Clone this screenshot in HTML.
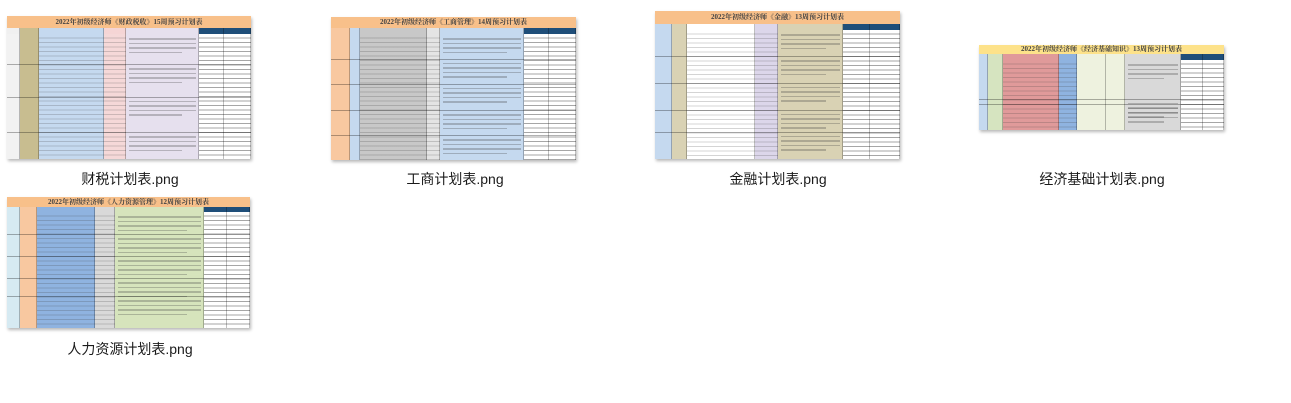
<!DOCTYPE html>
<html><head><meta charset="utf-8">
<style>
html,body{margin:0;padding:0;background:#fff;width:1291px;height:403px;overflow:hidden;position:relative;font-family:"Liberation Sans","Noto Sans CJK SC",sans-serif;}
.th{position:absolute;background:#fff;box-shadow:1px 2px 3px rgba(0,0,0,.28);overflow:hidden;}
.tt{position:absolute;left:0;right:0;top:0;font-family:"Liberation Serif","Noto Serif CJK SC",serif;font-size:7px;font-weight:bold;color:#444;text-align:center;white-space:nowrap;}
.col{position:absolute;border-right:1px solid rgba(0,0,0,.25);box-sizing:border-box;}
.hd{position:absolute;border-right:1px solid rgba(0,0,0,.25);box-sizing:border-box;}
.lb{position:absolute;font-size:14px;color:#1a1a1a;white-space:nowrap;transform:translateX(-50%);}
</style></head><body>
<div id="root"></div>
<div class="lb" style="left:130px;top:169px">财税计划表.png</div>
<div class="lb" style="left:455px;top:169px">工商计划表.png</div>
<div class="lb" style="left:778px;top:169px">金融计划表.png</div>
<div class="lb" style="left:1102px;top:169px">经济基础计划表.png</div>
<div class="lb" style="left:130px;top:339px">人力资源计划表.png</div>
<script>
var T=[
{x:7,y:16,w:244,h:143,th:12,hh:6,tc:'#f8c08a',t:'2022年初级经济师《财政税收》15周预习计划表',
 c:[[13,'#f2f2f2','#f0f0f0',0],[19,'#c8bd90','#c8bd90',0],[65,'#c5d9ef','#c5d9ef',1],[22,'#f5d8d8','#f5d5d5',1],[73,'#e6e0ee','#e6e0ee',3],[25,'#fff','#1f4e79',2],[27,'#fff','#1f4e79',2]],g:[0,34,70,110]},
{x:331,y:17,w:245,h:143,th:11,hh:6,tc:'#f8c08a',t:'2022年初级经济师《工商管理》14周预习计划表',
 c:[[19,'#f8c8a0','#f8c8a0',0],[10,'#c5d9ef','#c5d9ef',0],[67,'#c8c8c8','#c8c8c8',1],[13,'#e4e4e4','#e4e4e4',1],[84,'#c5d9ef','#c5d9ef',3],[25,'#fff','#1f4e79',2],[27,'#fff','#1f4e79',2]],g:[0,30,60,92,122]},
{x:655,y:11,w:245,h:148,th:13,hh:6,tc:'#f8c08a',t:'2022年初级经济师《金融》13周预习计划表',
 c:[[17,'#c5d9ef','#c5d9ef',0],[15,'#d9d2b4','#d9d2b4',0],[68,'#fff','#fff',1],[23,'#dcd6ea','#dcd6ea',1],[65,'#d9d2b4','#d9d2b4',3],[27,'#fff','#1f4e79',2],[30,'#fff','#1f4e79',2]],g:[0,29,58,88,112]},
{x:979,y:45,w:245,h:85,th:9,hh:6,tc:'#fde28a',t:'2022年初级经济师《经济基础知识》13周预习计划表',
 c:[[9,'#c5d9ef','#c5d9ef',0],[15,'#d6e4c0','#d6e4c0',0],[56,'#e09a9a','#e09a9a',1],[18,'#8fb3e0','#8fb3e0',1],[29,'#eef2df','#eef2df',0],[19,'#eef2df','#eef2df',0],[56,'#d9d9d9','#d9d9d9',3],[22,'#fff','#1f4e79',2],[21,'#fff','#1f4e79',2]],g:[0,44,50]},
{x:7,y:197,w:243,h:131,th:10,hh:5,tc:'#f8c08a',t:'2022年初级经济师《人力资源管理》12周预习计划表',
 c:[[13,'#d6eaf2','#d6eaf2',0],[17,'#f8c8a0','#f8c8a0',0],[58,'#8fb3e0','#8fb3e0',1],[20,'#d9d9d9','#d9d9d9',1],[89,'#d6e4bc','#d6e4bc',3],[23,'#fff','#1f4e79',2],[23,'#fff','#1f4e79',2]],g:[0,21,42,63,80]}
];
var r=document.getElementById('root'),h='';
T.forEach(function(o){
 h+='<div class="th" style="left:'+o.x+'px;top:'+o.y+'px;width:'+o.w+'px;height:'+o.h+'px">';
 h+='<div class="tt" style="height:'+o.th+'px;line-height:'+o.th+'px;background:'+o.tc+'">'+o.t+'</div>';
 var x=0,by=o.th+o.hh,bh=o.h-by;
 o.c.forEach(function(c){
  h+='<div class="hd" style="left:'+x+'px;top:'+o.th+'px;width:'+c[0]+'px;height:'+o.hh+'px;background:'+c[2]+'"></div>';
  var lines='';
  if(c[3]==1)lines='background-image:repeating-linear-gradient(to bottom,transparent 0,transparent 3.5px,rgba(60,60,60,.22) 3.5px,rgba(60,60,60,.22) 4.5px);';
  if(c[3]==2)lines='background-image:repeating-linear-gradient(to bottom,transparent 0,transparent 3.5px,rgba(0,0,0,.35) 3.5px,rgba(0,0,0,.35) 4.5px);';
  h+='<div class="col" style="left:'+x+'px;top:'+by+'px;width:'+c[0]+'px;height:'+bh+'px;background-color:'+c[1]+';'+lines+'"></div>';
  if(c[3]==3){
   // simulated text paragraphs
   for(var k=0;k<o.g.length;k++){
    var sy=by+4+(o.g[k])*bh/(o.g[o.g.length-1]+30);
    for(var j=0;j<4;j++){
     h+='<div style="position:absolute;left:'+(x+3)+'px;top:'+(sy+j*4.5)+'px;width:'+(c[0]-(j==3?20:6))+'px;height:1.5px;background:rgba(70,70,70,.3)"></div>';
    }
   }
  }
  x+=c[0];
 });
 o.g.forEach(function(g){if(g>0)h+='<div style="position:absolute;left:0;right:0;top:'+(by+g*bh/(o.g[o.g.length-1]+30))+'px;height:1px;background:rgba(0,0,0,.3)"></div>';});
 h+='</div>';
});
r.innerHTML=h;
</script>
</body></html>
